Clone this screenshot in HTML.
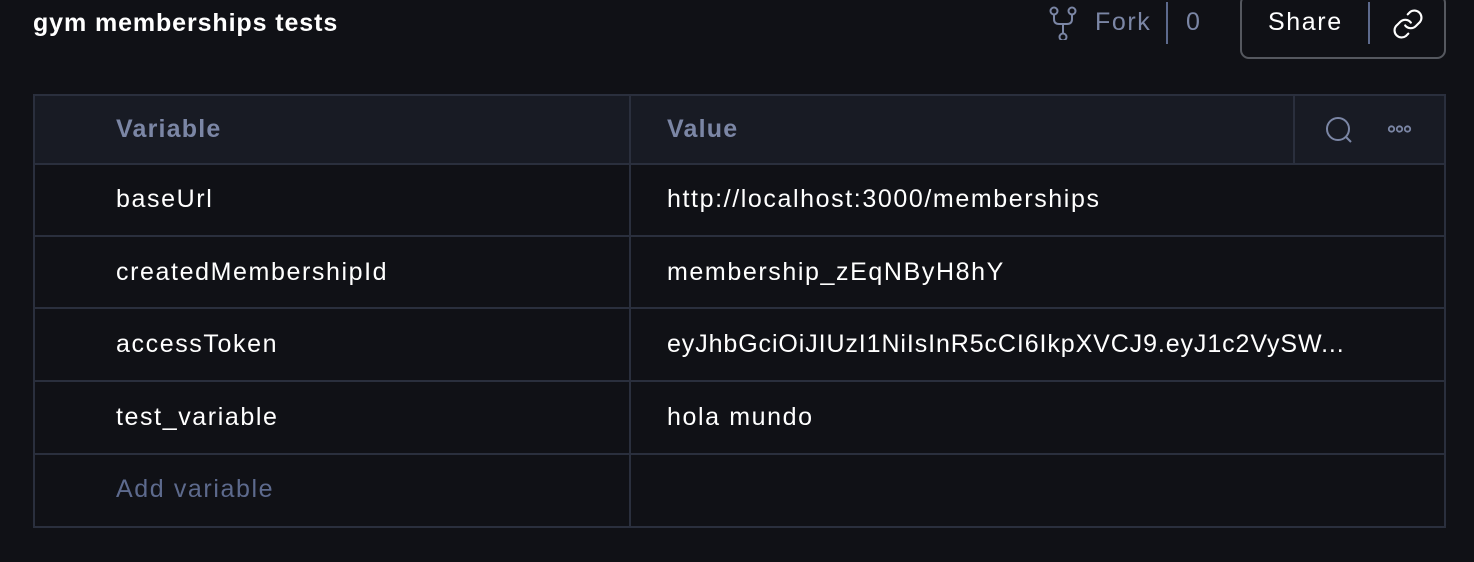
<!DOCTYPE html>
<html><head><style>
body{margin:0;width:1474px;height:562px;background:#101116;font-family:"Liberation Sans",sans-serif;overflow:hidden;position:relative;color:#fff}
.a{position:absolute}
.t{font-size:25px;letter-spacing:1.6px;white-space:nowrap}
.row{position:absolute;left:33px;width:1413px;height:2px;background:#2a2f3d}
</style></head><body>
<div class="a t" style="left:33px;top:9px;font-weight:bold;letter-spacing:0.9px">gym memberships tests</div>
<svg class="a" style="left:1046px;top:6px" width="34" height="34" viewBox="0 0 34 34" fill="none" stroke="#7b86a5" stroke-width="2">
<circle cx="8" cy="5" r="3.5"/><circle cx="26" cy="5" r="3.5"/><circle cx="17" cy="31" r="3.5"/>
<path d="M8 9v4q0 5 5 5h8q5 0 5-5V9M17 18v9"/></svg>
<div class="a t" style="left:1095px;top:8px;color:#7b86a5">Fork</div>
<div class="a" style="left:1166px;top:2px;width:2px;height:42px;background:#5d6a8d"></div>
<div class="a t" style="left:1186px;top:8px;color:#7b86a5">0</div>
<div class="a" style="left:1240px;top:-6px;width:202px;height:61px;border:2px solid #55585f;border-radius:9px"></div>
<div class="a t" style="left:1268px;top:8px">Share</div>
<div class="a" style="left:1368px;top:2px;width:2px;height:42px;background:#5d6a8d"></div>
<svg class="a" style="left:1390px;top:7px" width="36" height="34" viewBox="0 0 24 24" fill="none" stroke="#fff" stroke-width="1.5" stroke-linecap="round"><path d="M10 13a5 5 0 0 0 7.5.5l3-3a5 5 0 0 0-7-7l-1.7 1.7"/><path d="M14 11a5 5 0 0 0-7.5-.5l-3 3a5 5 0 0 0 7 7l1.7-1.7"/></svg>

<div class="a" style="left:33px;top:94px;width:1413px;height:71px;background:#181b24"></div>
<div class="a" style="left:33px;top:94px;width:1409px;height:430px;border:2px solid #2a2f3d"></div>
<div class="row" style="top:163px"></div>
<div class="row" style="top:235px"></div>
<div class="row" style="top:307px"></div>
<div class="row" style="top:380px"></div>
<div class="row" style="top:453px"></div>
<div class="a" style="left:629px;top:94px;width:2px;height:432px;background:#2a2f3d"></div>
<div class="a" style="left:1293px;top:94px;width:2px;height:70px;background:#2a2f3d"></div>
<svg class="a" style="left:1324px;top:115px" width="30" height="30" viewBox="0 0 30 30" fill="none" stroke="#7b86a5" stroke-width="2"><circle cx="14" cy="14" r="11"/><path d="M22 22l5 5"/></svg>
<svg class="a" style="left:1387px;top:124px" width="26" height="10" viewBox="0 0 26 10" fill="none" stroke="#7b86a5" stroke-width="1.8"><circle cx="4.5" cy="5" r="2.7"/><circle cx="12.5" cy="5" r="2.7"/><circle cx="20.5" cy="5" r="2.7"/></svg>

<div class="a t" style="left:116px;top:115px;color:#7b86a5;font-weight:bold;letter-spacing:1.2px">Variable</div>
<div class="a t" style="left:667px;top:115px;color:#7b86a5;font-weight:bold;letter-spacing:1.2px">Value</div>
<div class="a t" style="left:116px;top:185px">baseUrl</div>
<div class="a t" style="left:667px;top:185px">http://localhost:3000/memberships</div>
<div class="a t" style="left:116px;top:258px">createdMembershipId</div>
<div class="a t" style="left:667px;top:258px">membership_zEqNByH8hY</div>
<div class="a t" style="left:116px;top:330px">accessToken</div>
<div class="a t" style="left:667px;top:330px;letter-spacing:0.9px">eyJhbGciOiJIUzI1NiIsInR5cCI6IkpXVCJ9.eyJ1c2VySW...</div>
<div class="a t" style="left:116px;top:403px">test_variable</div>
<div class="a t" style="left:667px;top:403px">hola mundo</div>
<div class="a t" style="left:116px;top:475px;color:#5d6a8d">Add variable</div>
</body></html>
